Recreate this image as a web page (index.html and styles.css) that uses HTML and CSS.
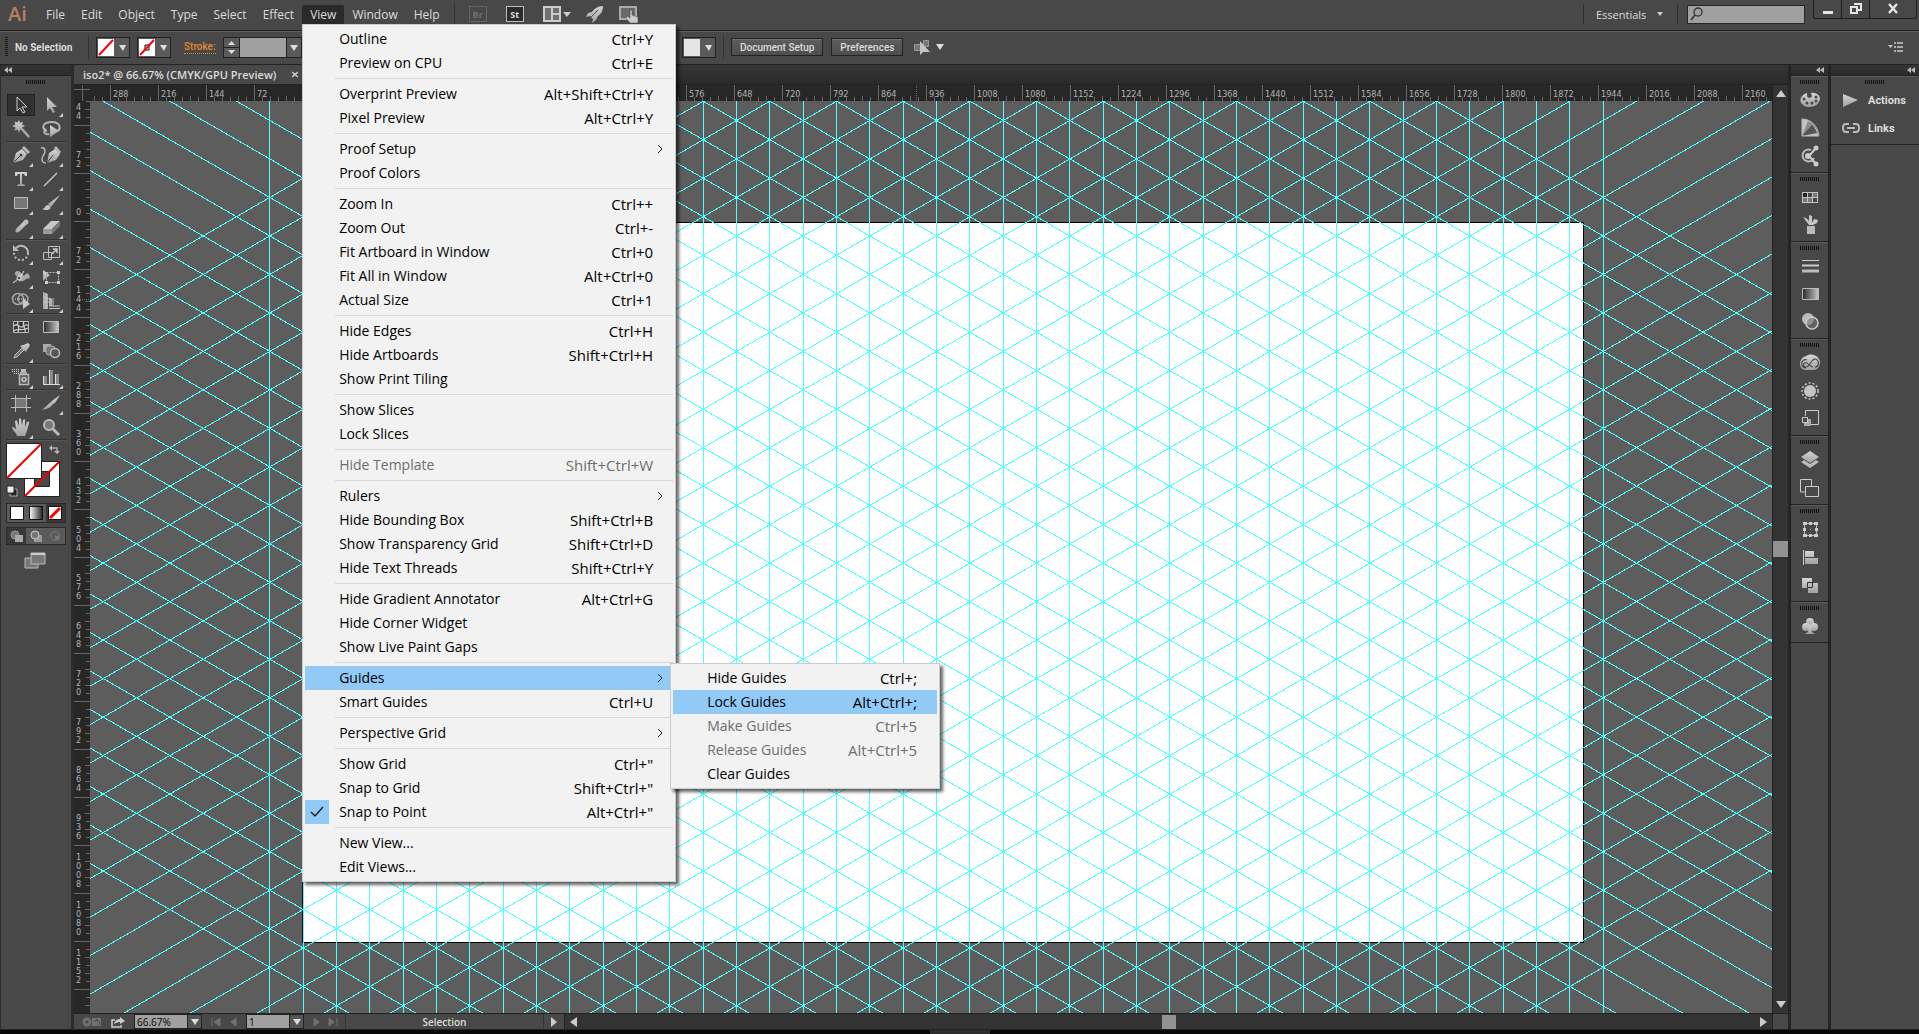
FILE: index.html
```
<!DOCTYPE html>
<html lang="en">
<head>
    <meta charset="UTF-8">
    <meta name="viewport" content="width=device-width, initial-scale=1.0">
    <title>iso2* @ 66.67% (CMYK/GPU Preview)</title>
    <link rel="stylesheet" href="styles.css">
</head>
<body>

    <!-- shared gradient for the icons -->
    <svg class="defs" width="0" height="0">
        <defs>
            <linearGradient id="metal" x1="0" y1="0" x2="0" y2="1">
                <stop offset="0" stop-color="#d4d4d4"/>
                <stop offset="1" stop-color="#a0a0a0"/>
            </linearGradient>
            <linearGradient id="fade" x1="0" y1="0" x2="1" y2="0">
                <stop offset="0" stop-color="#2a2a2a"/>
                <stop offset="1" stop-color="#c8c8c8"/>
            </linearGradient>
            <linearGradient id="fadeBack" x1="0" y1="0" x2="1" y2="0">
                <stop offset="0" stop-color="#ffffff"/>
                <stop offset="1" stop-color="#222222"/>
            </linearGradient>
        </defs>
    </svg>

    <header class="titlebar">
        <span class="logo">Ai</span>
        <nav>
            <ul class="menubar">
                <li><button>File</button></li>
                <li><button>Edit</button></li>
                <li><button>Object</button></li>
                <li><button>Type</button></li>
                <li><button>Select</button></li>
                <li><button>Effect</button></li>
                <li class="open"><button>View</button>
                    <ul class="menu">
                        <li><button><span>Outline</span><kbd>Ctrl+Y</kbd></button></li>
                        <li><button><span>Preview on CPU</span><kbd>Ctrl+E</kbd></button></li>
                        <li class="line"></li>
                        <li><button><span>Overprint Preview</span><kbd>Alt+Shift+Ctrl+Y</kbd></button></li>
                        <li><button><span>Pixel Preview</span><kbd>Alt+Ctrl+Y</kbd></button></li>
                        <li class="line"></li>
                        <li><button class="more"><span>Proof Setup</span><svg width="6" height="10"><path d="M1 1l4 4-4 4"/></svg></button></li>
                        <li><button><span>Proof Colors</span></button></li>
                        <li class="line"></li>
                        <li><button><span>Zoom In</span><kbd>Ctrl++</kbd></button></li>
                        <li><button><span>Zoom Out</span><kbd>Ctrl+-</kbd></button></li>
                        <li><button><span>Fit Artboard in Window</span><kbd>Ctrl+0</kbd></button></li>
                        <li><button><span>Fit All in Window</span><kbd>Alt+Ctrl+0</kbd></button></li>
                        <li><button><span>Actual Size</span><kbd>Ctrl+1</kbd></button></li>
                        <li class="line"></li>
                        <li><button><span>Hide Edges</span><kbd>Ctrl+H</kbd></button></li>
                        <li><button><span>Hide Artboards</span><kbd>Shift+Ctrl+H</kbd></button></li>
                        <li><button><span>Show Print Tiling</span></button></li>
                        <li class="line"></li>
                        <li><button><span>Show Slices</span></button></li>
                        <li><button><span>Lock Slices</span></button></li>
                        <li class="line"></li>
                        <li><button disabled><span>Hide Template</span><kbd>Shift+Ctrl+W</kbd></button></li>
                        <li class="line"></li>
                        <li><button class="more"><span>Rulers</span><svg width="6" height="10"><path d="M1 1l4 4-4 4"/></svg></button></li>
                        <li><button><span>Hide Bounding Box</span><kbd>Shift+Ctrl+B</kbd></button></li>
                        <li><button><span>Show Transparency Grid</span><kbd>Shift+Ctrl+D</kbd></button></li>
                        <li><button><span>Hide Text Threads</span><kbd>Shift+Ctrl+Y</kbd></button></li>
                        <li class="line"></li>
                        <li><button><span>Hide Gradient Annotator</span><kbd>Alt+Ctrl+G</kbd></button></li>
                        <li><button><span>Hide Corner Widget</span></button></li>
                        <li><button><span>Show Live Paint Gaps</span></button></li>
                        <li class="line"></li>
                        <li class="parent"><button class="more active"><span>Guides</span><svg width="6" height="10"><path d="M1 1l4 4-4 4"/></svg></button>
                            <ul class="menu submenu">
                                <li><button><span>Hide Guides</span><kbd>Ctrl+;</kbd></button></li>
                                <li><button class="active"><span>Lock Guides</span><kbd>Alt+Ctrl+;</kbd></button></li>
                                <li><button disabled><span>Make Guides</span><kbd>Ctrl+5</kbd></button></li>
                                <li><button disabled><span>Release Guides</span><kbd>Alt+Ctrl+5</kbd></button></li>
                                <li><button><span>Clear Guides</span></button></li>
                            </ul>
                        </li>
                        <li><button><span>Smart Guides</span><kbd>Ctrl+U</kbd></button></li>
                        <li class="line"></li>
                        <li><button class="more"><span>Perspective Grid</span><svg width="6" height="10"><path d="M1 1l4 4-4 4"/></svg></button></li>
                        <li class="line"></li>
                        <li><button><span>Show Grid</span><kbd>Ctrl+"</kbd></button></li>
                        <li><button><span>Snap to Grid</span><kbd>Shift+Ctrl+"</kbd></button></li>
                        <li><button class="checked"><svg class="tick" width="24" height="24"><path d="M6 12l4 4 8-9"/></svg><span>Snap to Point</span><kbd>Alt+Ctrl+"</kbd></button></li>
                        <li class="line"></li>
                        <li><button><span>New View...</span></button></li>
                        <li><button><span>Edit Views...</span></button></li>
                    </ul>
                </li>
                <li><button>Window</button></li>
                <li><button>Help</button></li>
            </ul>
        </nav>
        <div class="apps">
            <button class="app dim">Br</button>
            <button class="app">St</button>
            <button aria-label="Arrange documents"><svg width="28" height="16"><path d="M1 1h16v14H1z" fill="#707070" stroke="#ccc" stroke-width="2"/><path d="M9 1v14M9 8h8" stroke="#ccc" stroke-width="2"/><path d="M20 6h8l-4 5z" fill="#ccc"/></svg></button>
            <button aria-label="GPU performance"><svg width="18" height="18"><path d="M17 1c-5 0-9 3-11 6L2 8l-2 4 4-1 3 3-1 4 4-3 2-4c3-2 5-5 5-10z" fill="url(#metal)"/><path d="M5 12l7-7" stroke="#484848"/></svg></button>
            <button aria-label="Touch workspace"><svg width="20" height="18"><path d="M1 2h16v12H1z" fill="#6a6a6a" stroke="#aaa" stroke-width="2"/><path d="M11 18l-4-5 1-2 3 2V5h2v5l6 2v6z" fill="#ccc" stroke="#484848" stroke-width=".5"/></svg></button>
        </div>
        <div class="right">
            <select class="workspace-name" aria-label="Workspace"><option>Essentials</option></select>
            <svg width="6" height="4"><path d="M0 0h6L3 4z" fill="#ccc"/></svg>
        </div>
        <label class="search">
            <svg width="14" height="14"><circle cx="8" cy="5" r="4" fill="none" stroke="#333" stroke-width="1.3"/><path d="M5 8l-4 5" stroke="#333" stroke-width="1.6"/></svg>
            <input type="text" aria-label="Search">
        </label>
        <div class="window-buttons">
            <button aria-label="Minimize"><svg width="12" height="12"><path d="M1 8h10v3H1z" fill="#e6e6e6"/></svg></button>
            <button aria-label="Restore"><svg width="14" height="12"><path d="M5 1h7v6h-3M2 4h6v6H2z" fill="none" stroke="#e6e6e6" stroke-width="2"/></svg></button>
            <button class="close" aria-label="Close"><svg width="12" height="12"><path d="M2 1l8 9M10 1L2 10" stroke="#e6e6e6" stroke-width="2.4"/></svg></button>
        </div>
    </header>

    <div class="control-bar">
        <div class="controls">
            <i class="grip-v"></i>
            <strong>No Selection</strong>
            <i class="divider"></i>
            <button class="swatch" aria-label="Fill"><svg width="32" height="19"><path d="M1 1h16v17H1z" fill="#fff"/><path d="M2 17L16 2" stroke="#f00" stroke-width="2"/><path d="M22 7h7l-3 6z" fill="#ddd"/></svg></button>
            <button class="swatch" aria-label="Stroke color"><svg width="32" height="19"><path d="M1 1h16v17H1z" fill="#fff"/><path d="M7 7h4v5H7z" fill="none" stroke="#000"/><path d="M2 17L16 2" stroke="#f00" stroke-width="2"/><path d="M22 7h7l-3 6z" fill="#ddd"/></svg></button>
            <a class="stroke-link" href="#">Stroke:</a>
            <div class="stepper">
                <button aria-label="Stroke weight step"><svg width="15" height="19"><path d="M0 9.500h15" stroke="#222"/><path d="M4 7h7L7.500 3zM4 12h7l-3.500 4z" fill="#ddd"/></svg></button>
                <input type="text" aria-label="Stroke weight">
                <button aria-label="Stroke weight list"><svg width="14" height="19"><path d="M3 7h8l-4 6z" fill="#ddd"/></svg></button>
            </div>
        </div>
        <button class="swatch" aria-label="Style"><svg width="32" height="19"><path d="M1 1h16v17H1z" fill="#e4e4e4"/><path d="M22 7h7l-3 6z" fill="#ddd"/></svg></button>
        <i class="divider"></i>
        <button class="push">Document Setup</button>
        <button class="push">Preferences</button>
        <button class="plain" aria-label="Select similar"><svg width="32" height="18"><path d="M1.500 6.500h6v6h-6zM10.500 2.500h5v6h-5z" fill="#777" stroke="#999"/><path d="M7 3v14l3-3h7z" fill="#c4c4c4"/><path d="M23 6h8l-4 6z" fill="#ddd"/></svg></button>
        <button class="plain last" aria-label="Panel menu"><svg width="16" height="10"><path d="M0 3h5L2.500 6z" fill="#ccc"/><path d="M6 1h2M6 5h2M6 9h2M9 1h6M9 5h6M9 9h6" stroke="#ccc" stroke-width="1.500"/></svg></button>
    </div>

    <main class="workspace">

        <aside class="toolbox">
            <div class="panel-head left"><svg width="8" height="6"><path d="M4 0v6L0 3zM8 0v6L4 3z" fill="#bbb"/></svg></div>
            <i class="grip"></i>
            <div class="tools">
                <button class="selected" aria-label="Selection"><svg width="24" height="24"><path d="M8 4v14l3-3 3 5 2-1-3-5h5z" fill="#333" stroke="#ccc"/></svg></button>
                <button class="fly" aria-label="Direct selection"><svg width="24" height="24"><path d="M8 4v14l3-3 3 5 2-1-3-5h5z" fill="url(#metal)"/></svg></button>
                <button aria-label="Magic wand"><svg width="24" height="24"><path d="M10 3l1.200 3L14 4.500l-1 3 3 1.500-3 1.500 1 3-3-1L10 16l-1.500-3.500-3 1 1-3L3 9l3.500-1.500-1-3 3 1z" fill="url(#metal)"/><path d="M13 12l7 8" stroke="#aaa" stroke-width="2.500"/></svg></button>
                <button aria-label="Lasso"><svg width="24" height="24"><path d="M8 14c-6-2-5-9 5-9 8 0 9 6 6 9M7 12c-3 2-2 6 3 5" fill="none" stroke="#b5b5b5" stroke-width="2"/><path d="M11 8v12l9-6z" fill="url(#metal)"/></svg></button>
                <hr>
                <button class="fly" aria-label="Pen"><svg width="24" height="24"><path d="M4 20l3-10 6-4 5 5-4 6z" fill="url(#metal)"/><path d="M13 5l2-2 6 6-2 2z" fill="#bbb"/><path d="M4 20l8-8" stroke="#444"/><circle cx="12" cy="12" r="1.500" fill="#444"/></svg></button>
                <button class="fly" aria-label="Curvature"><svg width="24" height="24"><path d="M8 20l2-10 6-4 5 5-4 6z" fill="url(#metal)"/><path d="M15 5l2-2 5 6-2 2z" fill="#bbb"/><path d="M8 20l6-8" stroke="#444"/><path d="M2 5c5-1 5 4 2 8-2 4-1 7 3 7" fill="none" stroke="#bbb" stroke-width="1.500"/></svg></button>
                <button class="fly" aria-label="Type"><svg width="24" height="24"><path d="M6 5h12v4h-2l-1-2h-2v10l3 1v1H8v-1l3-1V7H9L8 9H6z" fill="url(#metal)"/></svg></button>
                <button class="fly" aria-label="Line segment"><svg width="24" height="24"><path d="M5 19L18 6" stroke="#c4c4c4" stroke-width="1.500"/></svg></button>
                <button class="fly" aria-label="Rectangle"><svg width="24" height="24"><path d="M5.500 6.500h13v11h-13z" fill="#777" stroke="#bbb"/></svg></button>
                <button class="fly" aria-label="Paintbrush"><svg width="24" height="24"><path d="M21 4L12 16l-3-3z" fill="url(#metal)"/><path d="M3 18c3 0 3-4 6-4 4 1 3 5-1 5-2 0-3 0-5-1z" fill="#c4c4c4"/></svg></button>
                <button class="fly" aria-label="Pencil"><svg width="24" height="24"><path d="M5 19l2-5 8-8 3 3-8 8z" fill="url(#metal)"/><circle cx="17" cy="7" r="2.500" fill="#bbb"/><path d="M5 19l1-3 2 2z" fill="#333"/></svg></button>
                <button class="fly" aria-label="Eraser"><svg width="24" height="24"><path d="M4 14l8-8h9l-8 8z" fill="#c8c8c8"/><path d="M4 14h9v5H4z" fill="#999"/><path d="M13 14l8-8v5l-8 8z" fill="#777"/></svg></button>
                <hr>
                <button class="fly" aria-label="Rotate"><svg width="24" height="24"><path d="M7 7a7 7 0 0 1 12 5" fill="none" stroke="#bbb" stroke-width="2"/><path d="M19 12a7 7 0 0 1-14 0V9" fill="none" stroke="#bbb" stroke-width="2" stroke-dasharray="2 2"/><path d="M4 4v6h6z" fill="#bbb"/></svg></button>
                <button class="fly" aria-label="Scale"><svg width="24" height="24"><path d="M9.500 5.500h11v11h-11zM4.500 11.500h8v7h-8z" fill="none" stroke="#bbb"/><path d="M13 13l5-5M14 8h4v4" fill="none" stroke="#ccc" stroke-width="1.500"/></svg></button>
                <button class="fly" aria-label="Width"><svg width="24" height="24"><path d="M4 17c4 3 9-4 4-6-3-1-3-5 1-5 5 1 4 7 8 3 3-3 4 4 4 5-3-3-6 4-11 2-2 0-3 3-6 1z" fill="#aaa"/><circle cx="10" cy="13" r="2" fill="#484848" stroke="#eee"/><path d="M4 18l5-4M11 12l4-6" stroke="#eee"/></svg></button>
                <button aria-label="Free transform"><svg width="24" height="24"><path d="M7.500 7.500h12v10h-12z" fill="none" stroke="#bbb" stroke-dasharray="2 1"/><path d="M18 6h3v3h-3zM18 16h3v3h-3zM6 16h3v3H6z" fill="#ccc"/><path d="M4 5v11l7-6z" fill="url(#metal)"/></svg></button>
                <button class="fly" aria-label="Shape builder"><svg width="24" height="24"><circle cx="9" cy="10" r="5.500" fill="none" stroke="#aaa" stroke-width="1.500"/><circle cx="14" cy="10" r="5" fill="none" stroke="#aaa" stroke-width="1.500"/><path d="M6 10h11" stroke="#ddd" stroke-dasharray="1 1"/><path d="M14 9v11l7-5z" fill="#c8c8c8"/></svg></button>
                <button class="fly" aria-label="Perspective grid"><svg width="24" height="24"><path d="M4 3l5 2v15H4zM10 8l3 2v7h-3z" fill="#aaa"/><path d="M4 8l9 3M4 13h9M7 4v16M10 17h11M10 19.500h11M14 9v8" stroke="#c4c4c4"/></svg></button>
                <hr>
                <button aria-label="Mesh"><svg width="24" height="24"><path d="M4.500 6.500h15v11h-15z" fill="#333" stroke="#bbb"/><path d="M5 11c4-4 5 2 8 1s4-4 6-1M5 16c3-4 8 1 14-3M9 7c-2 4 3 5 0 10M15 7c-3 4 3 6 1 10" fill="none" stroke="#ccc" stroke-width="1.300"/></svg></button>
                <button aria-label="Gradient"><svg width="24" height="24"><path d="M4.500 6.500h15v11h-15z" fill="url(#fade)" stroke="#bbb"/></svg></button>
                <button class="fly" aria-label="Eyedropper"><svg width="24" height="24"><path d="M5 19l1-3 7-7 2 2-7 7z" fill="#777" stroke="#bbb"/><path d="M11 7l6 6 1-2 2-3c2-3-1-5-3-3l-3 1z" fill="url(#metal)"/></svg></button>
                <button aria-label="Blend"><svg width="24" height="24"><path d="M4 5h8v8H4z" fill="#aaa"/><rect x="7" y="7" width="9" height="9" rx="3" fill="#777" stroke="#aaa"/><circle cx="16" cy="14" r="4.500" fill="#555" stroke="#bbb" stroke-width="1.500"/></svg></button>
                <hr>
                <button class="fly" aria-label="Symbol sprayer"><svg width="24" height="24"><path d="M12 4h5v3h-5z" fill="#bbb"/><path d="M10.500 9.500h9v10h-9z" fill="#555" stroke="#bbb" stroke-width="1.500"/><path d="M11 7h7v2h-7z" fill="#aaa"/><circle cx="15" cy="14.500" r="2" fill="none" stroke="#ccc" stroke-width="1.500"/><path d="M3 4.500h7M3 6.500h7M5 8.500h5" stroke="#ddd" stroke-dasharray="1 1"/></svg></button>
                <button class="fly" aria-label="Column graph"><svg width="24" height="24"><path d="M4 11h4v8H4zM10 5h4v14h-4zM16 9h4v10h-4z" fill="#888"/><path d="M4.500 11v8M10.500 5v14M16.500 9v10M4 19.500h17" stroke="#ddd"/></svg></button>
                <hr>
                <button aria-label="Artboard"><svg width="24" height="24"><path d="M6.500 7.500h11v9h-11z" fill="#777"/><path d="M2 7.500h20M2 16.500h20M6.500 4v17M17.500 4v17" stroke="#bbb"/></svg></button>
                <button class="fly" aria-label="Slice"><svg width="24" height="24"><path d="M21 4l-7 5-11 10c6-1 9-3 11-6l2-1z" fill="url(#metal)"/></svg></button>
                <button class="fly" aria-label="Hand"><svg width="24" height="24"><path d="M8 21c-1-4-5-6-5-9 2 0 3 2 4 2L6 6c1-1 2-1 2 0l2 5V4c1-1 2-1 2 0l1 7 1-6c1-1 2-1 2 0v7l2-5c1-1 2 0 2 1l-2 8-2 5z" fill="url(#metal)"/></svg></button>
                <button aria-label="Zoom"><svg width="24" height="24"><circle cx="10" cy="10" r="5" fill="#777" stroke="#bbb" stroke-width="2"/><path d="M14 14l6 6" stroke="#bbb" stroke-width="3"/></svg></button>
                <hr>
            </div>
            <svg class="fill-stroke" width="56" height="56">
                <path d="M18.500 18.500h35v35h-35zM28.500 28.500h15v15h-15z" fill="#fff" fill-rule="evenodd" stroke="#222"/>
                <path d="M19 53l34-34" stroke="#e00" stroke-width="2"/>
                <path d="M.5.500h35v35H.5z" fill="#fff" stroke="#222"/>
                <path d="M1 35L35 1" stroke="#e00" stroke-width="2"/>
                <path d="M45 5h6v5" fill="none" stroke="#aaa" stroke-width="1.500"/><path d="M46 2v6l-3-3zM48 8h6l-3 3z" fill="#bbb"/>
                <path d="M4 46h7v7H4z" fill="#222" stroke="#aaa"/><path d="M1 43h7v7H1z" fill="#eee" stroke="#222"/>
            </svg>
            <div class="modes">
                <button aria-label="Color"><svg width="14" height="14"><path d="M.5.500h13v13H.5z" fill="#fff" stroke="#111"/></svg></button>
                <button aria-label="Gradient fill"><svg width="14" height="14"><path d="M.5.500h13v13H.5z" fill="url(#fadeBack)" stroke="#111"/></svg></button>
                <button class="on" aria-label="None"><svg width="14" height="14"><path d="M.5.500h13v13H.5z" fill="#fff" stroke="#111"/><path d="M2 12L12 2" stroke="#f00" stroke-width="3"/></svg></button>
            </div>
            <div class="modes draw">
                <button class="on" aria-label="Draw normal"><svg width="14" height="12"><circle cx="5" cy="5" r="4" fill="#777" stroke="#999"/><path d="M5 5h8v7H5z" fill="#aaa"/></svg></button>
                <button aria-label="Draw behind"><svg width="14" height="12"><path d="M5 5h8v7H5z" fill="#999"/><circle cx="6" cy="5" r="4" fill="#777" stroke="#ccc"/></svg></button>
                <button aria-label="Draw inside"><svg width="14" height="12"><circle cx="7" cy="6" r="4.500" fill="none" stroke="#777"/><path d="M7 6h4v4H7z" fill="#777"/></svg></button>
            </div>
            <button class="screen-mode" aria-label="Screen mode"><svg width="22" height="18"><path d="M1 6h13v10H1z" fill="#777" stroke="#bbb"/><path d="M7 1h14v11H7z" fill="#777" stroke="#bbb"/><path d="M7 2h14" stroke="#ccc" stroke-width="2"/></svg></button>
        </aside>

        <section class="document">
            <div class="tabs">
                <div class="tab"><span>iso2* @ 66.67% (CMYK/GPU Preview)</span><button aria-label="Close tab"><svg width="6" height="7"><path d="M0 1l6 5M6 1L0 6" stroke="#ccc" stroke-width="1.500"/></svg></button></div>
            </div>
            <div class="view">
                <svg class="corner" width="16" height="16"><path d="M0 4.500h16M8.500 0v16" stroke="#666"/></svg>
                <svg class="ruler ruler-x" id="ruler-x"></svg>
                <div class="scroll scroll-y">
                    <button aria-label="Scroll up"><svg width="10" height="8"><path d="M0 7h10L5 0z" fill="#ccc"/></svg></button>
                    <i class="thumb"></i>
                    <button aria-label="Scroll down"><svg width="10" height="8"><path d="M0 1h10L5 8z" fill="#ccc"/></svg></button>
                </div>
                <svg class="ruler ruler-y" id="ruler-y"></svg>
                <svg class="canvas" id="canvas"></svg>
            </div>
            <footer class="status">
                <div class="status-left">
                    <svg width="20" height="10"><circle cx="5" cy="5" r="3" fill="none" stroke="#707070" stroke-width="3"/><path d="M10 1h9v8h-9z" fill="#707070"/><path d="M12 5l3-3v2c3 0 3 2 2 4" fill="none" stroke="#484848"/></svg>
                    <svg width="14" height="12"><path d="M4 4H1v7h9V9" fill="none" stroke="#ccc" stroke-width="1.500"/><path d="M3 8c1-4 4-5 6-5V1l5 4-5 3V6c-3 0-4 1-6 2z" fill="#ccc"/></svg>
                    <div class="combo"><input class="zoom" type="text" value="66.67%" aria-label="Zoom level"><button aria-label="Zoom list"><svg width="8" height="6"><path d="M0 0h8L4 6z" fill="#ddd"/></svg></button></div>
                    <svg width="26" height="8"><path d="M1 0v8M9 0v8L3 4zM25 0v8l-5-4z" fill="#707070" stroke="#707070"/></svg>
                    <div class="combo"><input class="page" type="text" value="1" aria-label="Artboard number"><button aria-label="Artboard list"><svg width="8" height="6"><path d="M0 0h8L4 6z" fill="#ddd"/></svg></button></div>
                    <svg width="26" height="8"><path d="M1 0v8l5-4zM16 0v8l5-4zM24 0v8" fill="#707070" stroke="#707070"/></svg>
                </div>
                <div class="tool-name">Selection</div>
                <button class="status-menu" aria-label="Status menu"><svg width="6" height="10"><path d="M0 0v10l6-5z" fill="#ccc"/></svg></button>
                <div class="scroll scroll-x">
                    <button aria-label="Scroll left"><svg width="7" height="10"><path d="M7 0v10L0 5z" fill="#ccc"/></svg></button>
                    <i class="thumb"></i>
                    <button aria-label="Scroll right"><svg width="7" height="10"><path d="M0 0v10l7-5z" fill="#ccc"/></svg></button>
                </div>
                <i class="size-box"></i>
            </footer>
        </section>

        <aside class="dock">
            <div class="panel-head"><svg width="8" height="6"><path d="M4 0v6L0 3zM8 0v6L4 3z" fill="#bbb"/></svg></div>
            <div class="group">
                <i class="grip"></i>
                <button aria-label="Color panel"><svg width="22" height="22"><path d="M8 4c-9 3-9 13 2 14 6 0 10-3 11-8 0-5-6-7-9-6l1 3c-1 3-5 2-5 0z" fill="url(#metal)"/><g fill="#484848"><circle cx="5" cy="10" r="1.500"/><circle cx="8" cy="14" r="1.500"/><circle cx="13" cy="14" r="1.500"/><circle cx="17" cy="12" r="1.500"/><circle cx="17" cy="8" r="1.500"/></g></svg></button>
                <button aria-label="Color guide"><svg width="22" height="22"><path d="M3 2c8 0 16 7 16 17H3z" fill="#c4c4c4"/><path d="M3 19L9 4c4 2 6 4 7 7z" fill="#8c8c8c"/><path d="M3 19l10-11c3 3 4 5 5 8z" fill="#555"/><path d="M3 2v17h17C19 9 12 2 3 2z" fill="none" stroke="#bbb"/></svg></button>
                <button aria-label="Color themes"><svg width="22" height="22"><path d="M12 5a6 6 0 1 0 3 8" fill="none" stroke="#bbb" stroke-width="2"/><path d="M10 11l7-8M10 11l7 8" stroke="#ccc" stroke-width="2"/><circle cx="9" cy="11" r="3" fill="#ccc"/><circle cx="17" cy="3" r="2.500" fill="#ccc"/><circle cx="17" cy="19" r="2.500" fill="#ccc"/></svg></button>
            </div>
            <div class="group">
                <i class="grip"></i>
                <button aria-label="Swatches"><svg width="22" height="22"><path d="M3 6h16v11H3z" fill="#c4c4c4"/><path d="M4 7h4v4H4z" fill="#222"/><path d="M9 7h4v4H9zM14 12h4v4h-4z" fill="#444"/><path d="M14 7h4v4h-4zM4 12h4v4H4zM9 12h4v4H9z" fill="#777"/></svg></button>
                <button aria-label="Brushes"><svg width="22" height="22"><path d="M8 12h8v8H8z" fill="#bbb"/><path d="M10 11L4 3c4 1 6 3 6 5V1l3 1v7l2-4 4 1-1 3-4 2z" fill="#c8c8c8"/></svg></button>
            </div>
            <div class="group">
                <i class="grip"></i>
                <button aria-label="Stroke panel"><svg width="22" height="22"><path d="M3 5.500h17" stroke="#ccc"/><path d="M3 10.500h17" stroke="#ccc" stroke-width="2"/><path d="M3 16h17" stroke="#bbb" stroke-width="3"/></svg></button>
                <button aria-label="Gradient panel"><svg width="22" height="22"><path d="M3.500 5.500h16v11h-16z" fill="url(#fade)" stroke="#bbb"/></svg></button>
                <button aria-label="Transparency"><svg width="22" height="22"><circle cx="9" cy="8" r="6" fill="#bbb"/><circle cx="13" cy="12" r="6" fill="#777" fill-opacity=".6" stroke="#ccc" stroke-width="1.500"/></svg></button>
            </div>
            <div class="group">
                <i class="grip"></i>
                <button aria-label="Libraries"><svg width="22" height="22"><path d="M7 4c3-3 13-2 14 6 0 5-3 8-6 8H7C-1 18-1 6 7 4z" fill="url(#metal)"/><path d="M14 15c-3 0-4-3-6-4-4-2-5 4-1 4s5-8 9-8c5 1 4 8 0 8M8 8c-6-2-8 7-1 8" fill="none" stroke="#484848" stroke-width="1.200"/></svg></button>
                <button aria-label="Appearance"><svg width="22" height="22"><circle cx="11" cy="11" r="6" fill="#c4c4c4"/><circle cx="11" cy="11" r="8" fill="none" stroke="#ccc" stroke-width="1.500" stroke-dasharray="2 2"/></svg></button>
                <button aria-label="Graphic styles"><svg width="22" height="22"><path d="M6.500 8V2.500h13v14H12" fill="none" stroke="#ccc"/><path d="M5 11h7v7H5z" fill="#aaa"/><path d="M3.500 9.500h5v5h-5z" fill="#484848" stroke="#ccc"/></svg></button>
            </div>
            <div class="group">
                <i class="grip"></i>
                <button aria-label="Layers"><svg width="22" height="22"><path d="M11 2l9 6-9 6-9-6z" fill="url(#metal)"/><path d="M2 13l3-2 6 4 6-4 3 2-9 6z" fill="#bbb"/></svg></button>
                <button aria-label="Artboards"><svg width="22" height="22"><path d="M6 15H1.500V2.500h11V9M6.500 9.500h13v10h-13z" fill="none" stroke="#ccc"/></svg></button>
            </div>
            <div class="group">
                <i class="grip"></i>
                <button aria-label="Transform"><svg width="22" height="22"><path d="M5.500 5.500h12v12h-12z" fill="none" stroke="#bbb"/><path d="M4 4h4v3H4zM10 4h3v3h-3zM15 4h4v3h-4zM4 10h3v3H4zM16 10h3v3h-3zM4 16h4v3H4zM10 16h3v3h-3zM15 16h4v3h-4zM11 11h1v1h-1z" fill="#ccc"/></svg></button>
                <button aria-label="Align"><svg width="22" height="22"><path d="M4.500 4v15" stroke="#ccc"/><path d="M6 5h9v6H6zM6 12h13v6H6z" fill="url(#metal)"/></svg></button>
                <button aria-label="Pathfinder"><svg width="22" height="22"><path d="M3 4h10v10H3zM9 9h10v10H9z" fill="url(#metal)"/><path d="M8.500 8.500h5v5h-5z" fill="#bbb" stroke="#333"/></svg></button>
            </div>
            <div class="group">
                <i class="grip"></i>
                <button aria-label="Symbols"><svg width="22" height="22"><g fill="url(#metal)"><circle cx="11" cy="7" r="4"/><circle cx="7" cy="12" r="4"/><circle cx="15" cy="12" r="4"/><path d="M10 10h2l1 7 3 2H6l3-2z"/></g></svg></button>
            </div>
        </aside>

        <aside class="panels">
            <div class="panel-head"><svg width="8" height="6"><path d="M4 0v6L0 3zM8 0v6L4 3z" fill="#bbb"/></svg></div>
            <div class="group">
                <i class="grip"></i>
                <button><svg width="18" height="16"><path d="M1 2v13l15-7z" fill="url(#metal)"/></svg>Actions</button>
                <button><svg width="18" height="12"><path d="M7 2H4Q1 2 1 6t3 4h3M11 2h3q3 0 3 4t-3 4h-3M5 6h8" fill="none" stroke="#bbb" stroke-width="2"/></svg>Links</button>
            </div>
        </aside>
    </main>

    <div class="taskbar"><i></i></div>

    <script src="script.js"></script>
</body>
</html>
```
FILE: styles.css
```
* {
    box-sizing: border-box;
}

body {
    margin: 0;
    height: 100vh;
    display: flex;
    flex-direction: column;
    overflow: hidden;
    background-color: #484848;
    color: #dcdcdc;
    font-family: "Open Sans", "Noto Sans", sans-serif;
    font-size: 12px;
}

button,
input,
select {
    font: inherit;
    color: inherit;
    border: 0;
    border-radius: 0;
    padding: 0;
    margin: 0;
    background: none;
    appearance: none;
}

button {
    display: flex;
    align-items: center;
    justify-content: center;
}

ul {
    list-style: none;
    margin: 0;
    padding: 0;
}

svg {
    display: block;
    flex: none;
}

.defs {
    position: absolute;
}

/* Title bar */
.titlebar {
    display: flex;
    align-items: center;
    height: 31px;
    flex: none;
    padding-bottom: 2px;
    border-bottom: 1px solid #222;
}

.logo {
    width: 38px;
    padding-left: 8px;
    color: #b9805c;
    font-family: "Open Sans", sans-serif;
    font-size: 20px;
    font-weight: 600;
    line-height: 28px;
}

.menubar {
    display: flex;
    height: 19px;
}

.menubar > li > button {
    height: 19px;
    padding: 0 8px;
    font-size: 12px;
}

.open {
    position: relative;
}

.open > button {
    background-color: #2a2a2a;
    border-radius: 2px 2px 0 0;
}

/* Drop-down menus */
.menu {
    position: absolute;
    z-index: 10;
    top: 100%;
    left: 0;
    width: 374px;
    padding: 2px;
    background-color: #f2f2f2;
    border: 1px solid #ccc;
    box-shadow: 3px 3px 3px rgba(0, 0, 0, 0.6);
    color: #000;
    font-size: 14px;
}

.submenu {
    top: -3px;
    left: calc(100% - 3px);
    width: 270px;
}

.menu button {
    position: relative;
    width: 100%;
    height: 24px;
    padding: 0 20px 0 34px;
    justify-content: space-between;
}

.menu kbd {
    font: inherit;
    font-size: 15px;
}

.menu button:disabled {
    color: #6d6d6d;
}

.menu .active {
    background-color: #91c9f7;
}

.menu .more {
    padding-right: 10px;
}

.menu svg {
    fill: none;
    stroke: #222;
}

.menu .tick {
    position: absolute;
    left: 0;
    top: 0;
    background-color: #91c9f7;
    stroke-width: 1.5;
}

.menu .line {
    height: 1px;
    margin: 3px 0 3px 30px;
    background-color: #d7d7d7;
}

.parent {
    position: relative;
}

.apps {
    display: flex;
    align-items: center;
    gap: 15px;
    height: 22px;
    padding-left: 14px;
    margin-left: 6px;
    border-left: 1px solid #333;
}

.app {
    width: 18px;
    height: 16px;
    margin-right: 4px;
    border: 1px solid #bbb;
    background-color: #2c2c2c;
    font-size: 9px;
    font-weight: 700;
}

.app.dim {
    border-color: #666;
    background: none;
    color: #707070;
}

.right {
    display: flex;
    align-items: center;
    gap: 10px;
    height: 20px;
    margin-left: auto;
    padding: 0 14px 0 12px;
    border-left: 1px solid #2e2e2e;
    border-right: 1px solid #2e2e2e;
}

.workspace-name {
    font-size: 11px;
}

.search {
    display: flex;
    align-items: center;
    width: 118px;
    height: 19px;
    margin: 0 8px 0 9px;
    padding: 0 2px;
    background-color: #a0a0a0;
    border: 1px solid #262626;
}

.search input {
    min-width: 0;
    flex: 1;
}

.window-buttons {
    display: flex;
    align-self: flex-start;
    height: 19px;
    margin-right: 2px;
    border: 1px solid #1e1e1e;
    border-top: 0;
    border-radius: 0 0 3px 3px;
}

.window-buttons button {
    width: 28px;
    border-right: 1px solid #1e1e1e;
}

.window-buttons .close {
    width: 46px;
    border-right: 0;
}

/* Control bar */
.control-bar {
    display: flex;
    align-items: center;
    height: 34px;
    flex: none;
    padding-bottom: 2px;
    border-top: 1px solid #5e5e5e;
    border-bottom: 1px solid #222;
    font-family: Roboto, "Open Sans", sans-serif;
    font-size: 10px;
    font-weight: 500;
}

.controls {
    display: flex;
    align-items: center;
    width: 682px;
    gap: 7px;
    padding-left: 5px;
}

.controls strong {
    width: 66px;
    font-weight: 700;
}

.grip-v {
    width: 3px;
    height: 20px;
    background: repeating-linear-gradient(#1c1c1c 0 1px, #484848 1px 2px);
}

.divider {
    width: 1px;
    height: 24px;
    background-color: #333;
}

.swatch {
    border: 1px solid #222;
    background-color: #5a5a5a;
}

.stroke-link {
    margin-left: 6px;
    color: #e08a30;
    text-decoration: none;
    border-bottom: 1px dotted #e08a30;
    line-height: 13px;
}

.stepper {
    display: flex;
    border: 1px solid #222;
    background-color: #5a5a5a;
}

.stepper input {
    width: 48px;
    background-color: #a0a0a0;
    border: solid #222;
    border-width: 0 1px;
}

.control-bar > .divider {
    margin: 0 7px;
}

.push {
    height: 18px;
    margin-right: 8px;
    padding: 0 8px;
    border: 1px solid #222;
    background: linear-gradient(#5e5e5e, #4e4e4e);
    box-shadow: inset 0 1px #707070;
}

.plain {
    margin-left: 2px;
}

.last {
    margin-left: auto;
    margin-right: 15px;
}

/* Workspace */
.workspace {
    display: flex;
    flex: 1;
    min-height: 0;
}

.toolbox,
.dock,
.panels {
    display: flex;
    flex-direction: column;
    flex: none;
    background-color: #484848;
    border-bottom: 1px solid #222;
}

.toolbox {
    width: 74px;
    align-items: flex-start;
    border-left: 1px solid #2e2e2e;
    border-right: 3px solid #2c2c2c;
}

.panel-head {
    display: flex;
    align-items: center;
    justify-content: flex-end;
    align-self: stretch;
    height: 11px;
    flex: none;
    padding-right: 4px;
    background: linear-gradient(#353535, #2b2b2b);
    border-bottom: 1px solid #222;
}

.panel-head.left {
    justify-content: flex-start;
    padding-left: 3px;
}

.grip {
    width: 20px;
    height: 4px;
    flex: none;
    background: repeating-linear-gradient(90deg, #111 0 1px, #484848 1px 2px);
}

.toolbox .grip {
    margin: 4px 0 9px 25px;
}

.tools {
    display: grid;
    grid-template-columns: 30px 30px;
    margin-left: 5px;
}

.tools button {
    position: relative;
    height: 24px;
}

.tools .selected {
    margin: 1px;
    height: 22px;
    background-color: #303030;
    border: 1px solid #222;
}

.fly::after {
    content: "";
    position: absolute;
    right: 3px;
    bottom: 0;
    border: 2px solid #d0d0d0;
    border-top-color: transparent;
    border-left-color: transparent;
}

.tools hr {
    grid-column: 1 / 3;
    width: 60px;
    height: 2px;
    margin: 0;
    border: 0;
    background-color: #333;
    border-bottom: 1px solid #555;
}

.fill-stroke {
    margin: 2px 0 0 5px;
}

.modes {
    display: grid;
    grid-template-columns: repeat(3, 1fr);
    width: 60px;
    height: 20px;
    margin: 4px 0 0 5px;
    border: 1px solid #2a2a2a;
    background-color: #5a5a5a;
}

.draw {
    height: 18px;
}

.modes .on {
    background-color: #383838;
}

.screen-mode {
    margin: 7px 0 0 23px;
}

/* Document window */
.document {
    display: flex;
    flex-direction: column;
    flex: 1;
    min-width: 0;
}

.tabs {
    display: flex;
    height: 20px;
    flex: none;
    background: linear-gradient(#363636, #2a2a2a);
    border-bottom: 1px solid #222;
}

.tab {
    display: flex;
    align-items: center;
    gap: 16px;
    padding: 0 9px;
    background-color: #484848;
    font-size: 11px;
    font-weight: 600;
}

.view {
    display: grid;
    grid-template-columns: 16px 1fr 16px;
    grid-template-rows: 16px 1fr;
    flex: 1;
    min-height: 0;
}

.ruler,
.corner,
.canvas {
    width: 100%;
    height: 100%;
    min-width: 0;
    min-height: 0;
    overflow: hidden;
}

.ruler,
.corner {
    background-color: #272727;
}

.ruler {
    fill: #b4b4b4;
    stroke: none;
    font-family: "DejaVu Sans Condensed", "DejaVu Sans", sans-serif;
    font-size: 9px;
}

.ruler path {
    fill: none;
    stroke: #666;
    shape-rendering: crispEdges;
}

.ruler .pointer {
    stroke-dasharray: 1 1;
}

.canvas {
    background-color: #5d5d5d;
}

.canvas .artboard {
    fill: #fff;
    stroke: #000;
    shape-rendering: crispEdges;
}

.canvas .guides {
    fill: none;
    stroke: #4dffff;
    shape-rendering: crispEdges;
}

.scroll {
    display: flex;
    align-items: center;
    justify-content: space-between;
    background-color: #333;
}

.scroll-y {
    grid-column: 3;
    grid-row: 1 / 3;
    flex-direction: column;
    padding: 5px 0;
    border-left: 1px solid #222;
}

.thumb {
    width: 14px;
    height: 14px;
    background-color: #929292;
}

.scroll-y .thumb {
    width: 15px;
    height: 16px;
}

.status {
    display: flex;
    height: 17px;
    flex: none;
    border-top: 1px solid #222;
    border-bottom: 1px solid #222;
    font-size: 10px;
    font-weight: 600;
}

.status-left {
    display: flex;
    align-items: center;
    gap: 9px;
    width: 272px;
    padding-left: 8px;
    border-right: 1px solid #333;
}

.combo {
    display: flex;
    height: 15px;
    border: 1px solid #222;
    background-color: #555;
}

.combo input {
    background-color: #a0a0a0;
    color: #000;
    padding-left: 2px;
    font-weight: 400;
}

.zoom {
    width: 52px;
}

.page {
    width: 42px;
}

.combo button {
    width: 14px;
    border-left: 1px solid #222;
}

.tool-name {
    width: 198px;
    line-height: 16px;
    text-align: center;
    border-right: 1px solid #333;
}

.status-menu {
    width: 20px;
}

.scroll-x {
    flex: 1;
    padding: 0 5px;
    border-left: 1px solid #222;
}

.size-box {
    width: 16px;
    border-left: 1px solid #222;
}

/* Panels on the right */
.dock {
    width: 40px;
    border-left: 3px solid #242424;
}

.group {
    display: flex;
    flex-direction: column;
    align-items: center;
    padding: 3px 0 2px;
    border-top: 1px solid #5a5a5a;
    border-bottom: 1px solid #222;
}

.group .grip {
    margin-bottom: 2px;
}

.group button {
    height: 28px;
}

.panels {
    width: 91px;
    border-left: 3px solid #242424;
}

.panels .group button {
    width: 100%;
    justify-content: flex-start;
    gap: 8px;
    padding-left: 11px;
    font-family: Roboto, "Open Sans", sans-serif;
    font-size: 11px;
    font-weight: 700;
}

.taskbar {
    height: 4px;
    flex: none;
    display: flex;
    justify-content: center;
    background-color: #080808;
}

.taskbar i {
    width: 60px;
    background-color: #2c2c2c;
}
```
FILE: script.js
```
const SVG = 'http://www.w3.org/2000/svg';

// artboard origin inside the canvas, and pixels per 72 points at 66.67%
const originX = 213;
const originY = 121;
const major = 48;

function add(parent, name, attrs, text) {
    const el = document.createElementNS(SVG, name);
    for (const key in attrs) {
        el.setAttribute(key, attrs[key]);
    }
    if (text !== undefined) {
        el.textContent = text;
    }
    parent.appendChild(el);
}

function drawRulers() {
    const rulerX = document.getElementById('ruler-x');
    const rulerY = document.getElementById('ruler-y');
    const width = rulerX.getBoundingClientRect().width;
    const height = rulerY.getBoundingClientRect().height;
    let ticksX = '';
    let ticksY = '';

    for (let i = -5; i <= 60; i++) {
        const x = originX + i * major;
        const y = originY + i * major;
        ticksX += `M${x - 0.5} 0v16`;
        ticksY += `M0 ${y - 0.5}h16`;
        for (let j = 1; j < 6; j++) {
            ticksX += `M${x + j * 8 - 0.5} ${j % 2 ? 12 : 11}v5`;
            ticksY += `M${j % 2 ? 12 : 11} ${y + j * 8 - 0.5}h5`;
        }

        const label = String(Math.abs(i * 72));
        if (x > 0 && x < width - 22) {
            add(rulerX, 'text', { x: x + 2, y: 12 }, label);
        }
        // digits of the left ruler are stacked and end above their tick
        if (y > 0 && y < height) {
            [...label].forEach((digit, n) => {
                const base = y - 7 - (label.length - 1 - n) * 9;
                if (base > 5) {
                    add(rulerY, 'text', { x: 2, y: base }, digit);
                }
            });
        }
    }

    add(rulerX, 'path', { d: ticksX });
    add(rulerY, 'path', { d: ticksY });
    add(rulerX, 'path', { d: 'M826.5 0v16', class: 'pointer' });
    add(rulerY, 'path', { d: 'M0 198.5h16', class: 'pointer' });
}

function drawCanvas() {
    const canvas = document.getElementById('canvas');
    add(canvas, 'rect', { class: 'artboard', x: originX - 0.5, y: originY + 0.5, width: 1281, height: 720 });

    // isometric guides: 41 in each of the three directions
    const slope = Math.tan(Math.PI / 6);
    const stepX = 100 / 3;
    const stepY = stepX * slope * 2;
    const nodeX = 613.2;
    const nodeY = 115.7;
    const end = 4000;
    let d = '';
    for (let k = 0; k <= 40; k++) {
        const x = Math.floor(nodeX + (k - 13) * stepX) + 0.5;
        const down = nodeY - nodeX * slope + (k - 14) * stepY;
        const up = nodeY + nodeX * slope + (k - 7) * stepY;
        d += `M${x} 0V${end}`;
        d += `M0 ${down}L${end} ${down + end * slope}`;
        d += `M0 ${up}L${end} ${up - end * slope}`;
    }
    add(canvas, 'path', { class: 'guides', d: d });
}

drawRulers();
drawCanvas();
```
